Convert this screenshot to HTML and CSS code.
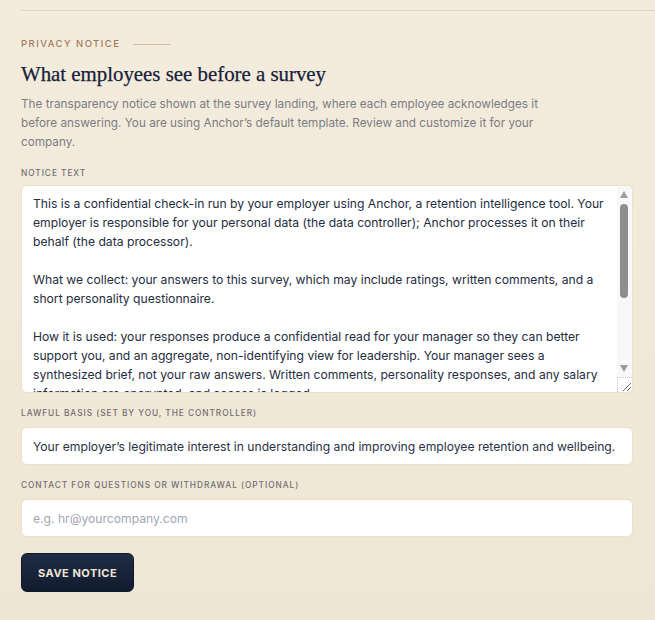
FILE: index.html
```html
<!DOCTYPE html>
<html lang="en">
<head>
<meta charset="utf-8">
<title>Privacy notice</title>
<link rel="stylesheet" href="styles.css">
</head>
<body>
<section class="section">
  <div class="eyebrow"><span>PRIVACY NOTICE</span><i class="eyebrow-rule"></i></div>
  <h2 class="title">What employees see before a survey</h2>
  <p class="lead">The transparency notice shown at the survey landing, where each employee acknowledges it before answering. You are using Anchor’s default template. Review and customize it for your company.</p>

  <div class="field field-first">
    <label class="label label-first" for="notice">NOTICE TEXT</label>
    <div class="textarea-wrap">
      <textarea id="notice" class="textarea">This is a confidential check-in run by your employer using Anchor, a retention intelligence tool. Your employer is responsible for your personal data (the data controller); Anchor processes it on their behalf (the data processor).

What we collect: your answers to this survey, which may include ratings, written comments, and a short personality questionnaire.

How it is used: your responses produce a confidential read for your manager so they can better support you, and an aggregate, non-identifying view for leadership. Your manager sees a synthesized brief, not your raw answers. Written comments, personality responses, and any salary information are encrypted, and access is logged.

How long we keep it: your responses are kept for as long as your employer uses Anchor, or until you ask for them to be deleted.

Your rights: you can ask to see, correct, or delete your data, or withdraw at any time, by contacting your employer. Taking part is voluntary.</textarea>
      <div class="scrollbar" aria-hidden="true">
        <span class="sb-arrow sb-up"></span>
        <span class="sb-thumb"></span>
        <span class="sb-arrow sb-down"></span>
      </div>
      <span class="resizer" aria-hidden="true">
        <svg width="13" height="13" viewBox="0 0 13 13"><path d="M4 12 L12 4 M8 12 L12 8" stroke="#6c6c6c" stroke-width="1" fill="none"/></svg>
      </span>
    </div>
  </div>

  <div class="field field-basis">
    <label class="label" for="basis">LAWFUL BASIS (SET BY YOU, THE CONTROLLER)</label>
    <input id="basis" class="input" type="text" value="Your employer’s legitimate interest in understanding and improving employee retention and wellbeing.">
  </div>

  <div class="field field-contact">
    <label class="label" for="contact">CONTACT FOR QUESTIONS OR WITHDRAWAL (OPTIONAL)</label>
    <input id="contact" class="input" type="text" placeholder="e.g. hr@yourcompany.com">
  </div>

  <button class="button" type="button">SAVE NOTICE</button>
</section>
</body>
</html>
```

FILE: styles.css
```css
html, body {
  margin: 0;
  padding: 0;
}

body {
  min-height: 620px;
  background: linear-gradient(180deg, #f3ecdd 0%, #efe6d4 100%);
  font-family: Inter, "Liberation Sans", sans-serif;
  color: #1c2438;
}

.section {
  margin: 10px 0 0 21px;
  border-top: 1px solid #ddd4c2;
  padding: 26px 22px 28px 0;
  display: flex;
  flex-direction: column;
}

.eyebrow {
  display: flex;
  align-items: center;
  gap: 13px;
  font-size: 9.5px;
  font-weight: 500;
  letter-spacing: 1.45px;
  color: #a57a5c;
  line-height: 14px;
}

.eyebrow-rule {
  display: block;
  width: 37px;
  height: 1px;
  background: #d8b99c;
}

.title {
  margin: 9px 0 0;
  font-family: "Liberation Serif", "DejaVu Serif", serif;
  font-weight: 400;
  font-size: 20.85px;
  line-height: 28px;
  color: #17213a;
  -webkit-text-stroke: 0.25px #17213a;
}

.lead {
  margin: 7px 0 0;
  max-width: 526px;
  font-size: 11.75px;
  line-height: 19px;
  color: #7c7c84;
}

.field {
  display: flex;
  flex-direction: column;
}

.field-first {
  margin-top: 15px;
}

.field-basis {
  margin-top: 14px;
}

.field-contact {
  margin-top: 14px;
}

.label {
  font-size: 8.3px;
  font-weight: 500;
  letter-spacing: 0.95px;
  color: #6f6f74;
  line-height: 12px;
  margin-bottom: 8px;
}

.label-first {
  margin-bottom: 6px;
}

.textarea-wrap {
  position: relative;
  display: flex;
}

.textarea {
  flex: 1;
  box-sizing: border-box;
  height: 208px;
  padding: 8px 23px 8px 11px;
  border: 1px solid #ece1c8;
  border-radius: 6px;
  background: #ffffff;
  font-family: Inter, "Liberation Sans", sans-serif;
  font-size: 12.15px;
  line-height: 19px;
  color: #252c40;
  resize: none;
  outline: none;
  overflow: hidden;
}

.scrollbar {
  position: absolute;
  top: 1px;
  right: 1px;
  width: 15px;
  height: 191px;
  background: #f8f8f8;
  border-top-right-radius: 5px;
}

.sb-arrow {
  position: absolute;
  left: 3px;
  width: 0;
  height: 0;
  border-left: 4.5px solid transparent;
  border-right: 4.5px solid transparent;
}

.sb-up {
  top: 5px;
  border-bottom: 7px solid #9d9d9d;
}

.sb-down {
  top: 179px;
  border-top: 7px solid #9d9d9d;
}

.sb-thumb {
  position: absolute;
  top: 18px;
  left: 3px;
  width: 8px;
  height: 94px;
  border-radius: 4px;
  background: #8e8e8e;
}

.resizer {
  position: absolute;
  right: 1px;
  bottom: 1px;
  box-sizing: border-box;
  width: 15px;
  height: 15px;
  border-top: 1px dotted #c4c4c4;
  border-left: 1px dotted #c4c4c4;
  background: #ffffff;
  border-bottom-right-radius: 5px;
  display: flex;
  align-items: flex-end;
  justify-content: flex-end;
}

.resizer svg {
  display: block;
}

.input {
  box-sizing: border-box;
  height: 38px;
  padding: 0 11px;
  border: 1px solid #ece1c8;
  border-radius: 6px;
  background: #ffffff;
  font-family: Inter, "Liberation Sans", sans-serif;
  font-size: 12.15px;
  color: #2a3044;
  outline: none;
}

.input::placeholder {
  color: #a3a7b2;
}

.button {
  align-self: flex-start;
  margin-top: 16px;
  height: 39px;
  padding: 0 16px;
  border: 1px solid #0f1729;
  border-radius: 6px;
  background: linear-gradient(180deg, #1f2c47 0%, #121b2e 100%);
  color: #efe6d4;
  font-family: Inter, "Liberation Sans", sans-serif;
  font-size: 11px;
  font-weight: 700;
  letter-spacing: 0.5px;
  cursor: pointer;
}
```
